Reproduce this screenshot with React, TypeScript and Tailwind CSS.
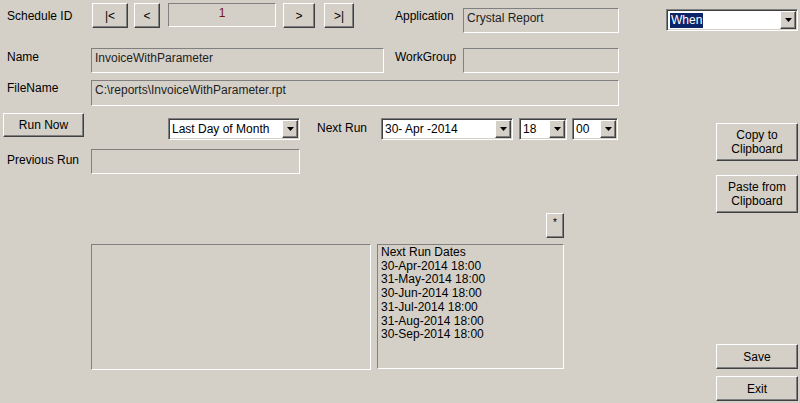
import React from "react";

const Btn = ({ className = "", children }: { className?: string; children?: React.ReactNode }) => (
  <div
    className={`flex shrink-0 flex-col items-center justify-center bg-[#d4d0c8] border border-t-white border-l-white border-b-[#404040] border-r-[#404040] shadow-[inset_-1px_-1px_0_#808080] leading-[14px] text-black ${className}`}
  >
    {children}
  </div>
);

const TextBox = ({ className = "", children }: { className?: string; children?: React.ReactNode }) => (
  <div
    className={`shrink-0 bg-[#d4d0c8] border border-t-[#808080] border-l-[#808080] border-b-white border-r-white px-[3px] pt-[2px] leading-[14px] text-[#1e1e1e] ${className}`}
  >
    {children}
  </div>
);

const Arrow = () => (
  <svg width="7" height="4" viewBox="0 0 7 4">
    <polygon points="0,0 7,0 3.5,4" fill="#000" />
  </svg>
);

const Combo = ({ className = "", children }: { className?: string; children?: React.ReactNode }) => (
  <div
    className={`flex shrink-0 bg-white border border-t-[#808080] border-l-[#808080] border-b-white border-r-white p-px shadow-[inset_1px_1px_0_#404040,inset_-1px_-1px_0_#d4d0c8] ${className}`}
  >
    <div className="flex flex-1 items-center pl-[2px] leading-[14px] text-black overflow-hidden whitespace-nowrap">
      {children}
    </div>
    <Btn className="w-[16px] h-full">
      <Arrow />
    </Btn>
  </div>
);

const Label = ({ className = "", children }: { className?: string; children?: React.ReactNode }) => (
  <div className={`shrink-0 leading-[14px] text-black whitespace-nowrap ${className}`}>{children}</div>
);

export default function App() {
  const dates = [
    "30-Apr-2014 18:00",
    "31-May-2014 18:00",
    "30-Jun-2014 18:00",
    "31-Jul-2014 18:00",
    "31-Aug-2014 18:00",
    "30-Sep-2014 18:00",
  ];
  return (
    <div className="flex w-[800px] h-[403px] overflow-hidden bg-[#d4d0c8] font-['Liberation_Sans',Arial,sans-serif] text-[12px]">
      {/* left area */}
      <div className="flex flex-col w-[666px] shrink-0">
        {/* Row A */}
        <div className="flex items-start mt-[3px] h-[30px]">
          <Label className="w-[92px] pl-[7px] pt-[6px]">Schedule ID</Label>
          <Btn className="w-[36px] h-[25px]">|&lt;</Btn>
          <Btn className="ml-[6px] w-[26px] h-[25px]">&lt;</Btn>
          <TextBox className="ml-[8px] w-[108px] h-[24px] text-center !text-[#7a1414]">1</TextBox>
          <Btn className="ml-[7px] w-[32px] h-[25px]">&gt;</Btn>
          <Btn className="ml-[9px] w-[30px] h-[25px]">&gt;|</Btn>
          <Label className="ml-[41px] w-[68px] pt-[6px]">Application</Label>
          <TextBox className="mt-[5px] w-[156px] h-[25px]">Crystal Report</TextBox>
        </div>
        {/* Row B */}
        <div className="flex items-start mt-[15px] h-[25px]">
          <Label className="w-[91px] pl-[7px] pt-[2px]">Name</Label>
          <TextBox className="w-[293px] h-[25px]">InvoiceWithParameter</TextBox>
          <Label className="ml-[11px] w-[68px] pt-[2px]">WorkGroup</Label>
          <TextBox className="w-[156px] h-[25px]" />
        </div>
        {/* Row C */}
        <div className="flex items-start mt-[7px] h-[26px]">
          <Label className="w-[91px] pl-[7px] pt-[1px]">FileName</Label>
          <TextBox className="w-[528px] h-[26px]">C:\reports\InvoiceWithParameter.rpt</TextBox>
        </div>
        {/* Row D */}
        <div className="flex items-start mt-[7px] h-[29px]">
          <Btn className="ml-[3px] w-[81px] h-[24px]">Run Now</Btn>
          <Combo className="ml-[84px] mt-[5px] w-[132px] h-[22px]">Last Day of Month</Combo>
          <Label className="ml-[17px] w-[64px] pt-[8px]">Next Run</Label>
          <Combo className="mt-[5px] w-[132px] h-[22px]">30- Apr -2014</Combo>
          <Combo className="ml-[6px] mt-[5px] w-[48px] h-[22px]">18</Combo>
          <Combo className="ml-[5px] mt-[5px] w-[46px] h-[22px]">00</Combo>
        </div>
        {/* Row E */}
        <div className="flex items-start mt-[7px] h-[25px]">
          <Label className="w-[91px] pl-[7px] pt-[4px]">Previous Run</Label>
          <TextBox className="w-[209px] h-[25px]" />
        </div>
        {/* Row F */}
        <div className="flex mt-[39px] h-[25px]">
          <Btn className="ml-[546px] w-[18px] h-[25px] !justify-start pt-[2px] text-[10px]">*</Btn>
        </div>
        {/* Row G */}
        <div className="flex items-start mt-[6px]">
          <TextBox className="ml-[91px] w-[280px] h-[126px]" />
          <TextBox className="ml-[6px] w-[187px] h-[125px] !pt-[1px] !leading-[13.7px] !text-black">
            <div>Next Run Dates</div>
            {dates.map((d) => (
              <div key={d}>{d}</div>
            ))}
          </TextBox>
        </div>
      </div>
      {/* right column */}
      <div className="flex flex-col items-end w-[132px] shrink-0">
        <Combo className="mt-[9px] w-[132px] h-[22px]">
          <span className="bg-[#0a246a] text-white px-px leading-[15px]">When</span>
        </Combo>
        <Btn className="mt-[92px] w-[82px] h-[38px]">
          <span>Copy to</span>
          <span>Clipboard</span>
        </Btn>
        <Btn className="mt-[14px] w-[82px] h-[38px]">
          <span>Paste from</span>
          <span>Clipboard</span>
        </Btn>
        <Btn className="mt-[131px] w-[82px] h-[25px]">Save</Btn>
        <Btn className="mt-[7px] w-[82px] h-[25px]">Exit</Btn>
      </div>
    </div>
  );
}
